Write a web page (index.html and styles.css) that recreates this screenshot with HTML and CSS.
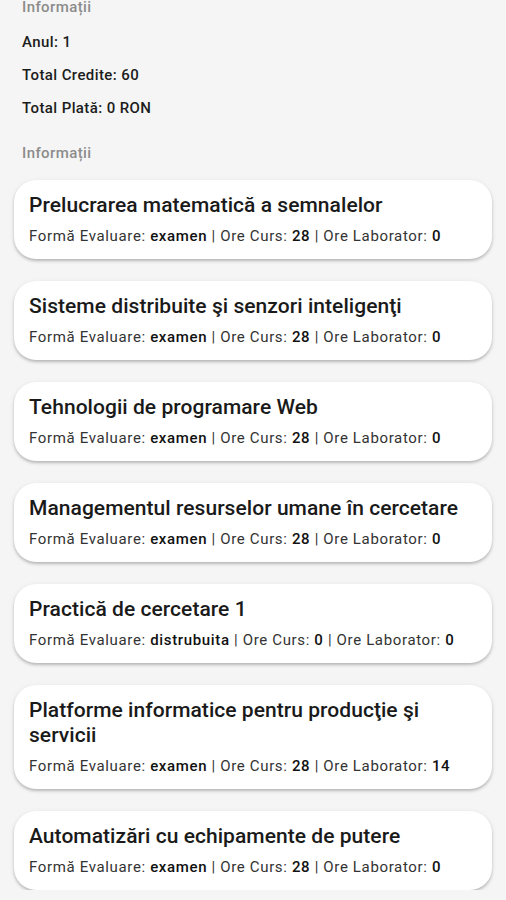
FILE: index.html
```html
<!DOCTYPE html>
<html>
  <head>
    <title>Informații</title>
    <link rel="stylesheet" href="styles.css">
  </head>
  <body>
    <div id="page">
      <div class="section-title first">Informații</div>
      <div class="info-row">Anul: 1</div>
      <div class="info-row">Total Credite: 60</div>
      <div class="info-row">Total Plată: 0 RON</div>
      <div class="section-title second">Informații</div>

      <div class="course-list">
        <div class="course-card">
          <div class="course-name">Prelucrarea matematică a semnalelor</div>
          <div class="course-meta">Formă Evaluare: <b>examen</b> | Ore Curs: <b>28</b> | Ore Laborator: <b>0</b></div>
        </div>
        <div class="course-card">
          <div class="course-name">Sisteme distribuite şi senzori inteligenţi</div>
          <div class="course-meta">Formă Evaluare: <b>examen</b> | Ore Curs: <b>28</b> | Ore Laborator: <b>0</b></div>
        </div>
        <div class="course-card">
          <div class="course-name">Tehnologii de programare Web</div>
          <div class="course-meta">Formă Evaluare: <b>examen</b> | Ore Curs: <b>28</b> | Ore Laborator: <b>0</b></div>
        </div>
        <div class="course-card">
          <div class="course-name">Managementul resurselor umane în cercetare</div>
          <div class="course-meta">Formă Evaluare: <b>examen</b> | Ore Curs: <b>28</b> | Ore Laborator: <b>0</b></div>
        </div>
        <div class="course-card">
          <div class="course-name">Practică de cercetare 1</div>
          <div class="course-meta">Formă Evaluare: <b>distrubuita</b> | Ore Curs: <b>0</b> | Ore Laborator: <b>0</b></div>
        </div>
        <div class="course-card">
          <div class="course-name">Platforme informatice pentru producţie şi servicii</div>
          <div class="course-meta">Formă Evaluare: <b>examen</b> | Ore Curs: <b>28</b> | Ore Laborator: <b>14</b></div>
        </div>
        <div class="course-card">
          <div class="course-name">Automatizări cu echipamente de putere</div>
          <div class="course-meta">Formă Evaluare: <b>examen</b> | Ore Curs: <b>28</b> | Ore Laborator: <b>0</b></div>
        </div>
      </div>
    </div>
  </body>
</html>
```

FILE: styles.css
```css
body,
html {
  margin: 0;
  background: #f5f5f5;
  font-family: Roboto, "Noto Sans", sans-serif;
  color: #1c1c1c;
  overflow: hidden;
}
#page {
  margin-top: -3px;
}
.section-title {
  padding-left: 22px;
  font-size: 15px;
  line-height: 20px;
  letter-spacing: 0.4px;
  font-weight: 500;
  color: #8c8c8c;
}
.section-title.first {
  margin-bottom: 15px;
}
.section-title.second {
  margin-top: 25px;
  margin-bottom: 17px;
}
.info-row {
  padding-left: 22px;
  font-size: 15px;
  line-height: 20px;
  letter-spacing: 0.4px;
  font-weight: 500;
  margin-bottom: 13px;
}
.info-row:nth-of-type(4) {
  margin-bottom: 0;
}
.course-list {
  display: flex;
  flex-direction: column;
  gap: 22px;
  padding: 0 14px;
}
.course-card {
  background: #fff;
  border-radius: 22px;
  padding: 13px 15px 13px;
  box-shadow: 0 2px 3px rgba(0, 0, 0, 0.22), 0 1px 6px rgba(0, 0, 0, 0.06);
}
.course-name {
  font-size: 21px;
  line-height: 25px;
  letter-spacing: 0.05px;
  font-weight: 500;
  color: #1a1a1a;
}
.course-meta {
  margin-top: 8px;
  font-size: 15px;
  line-height: 20px;
  letter-spacing: 0.65px;
  color: #333;
}
.course-meta b {
  font-weight: 500;
  color: #111;
}
```
